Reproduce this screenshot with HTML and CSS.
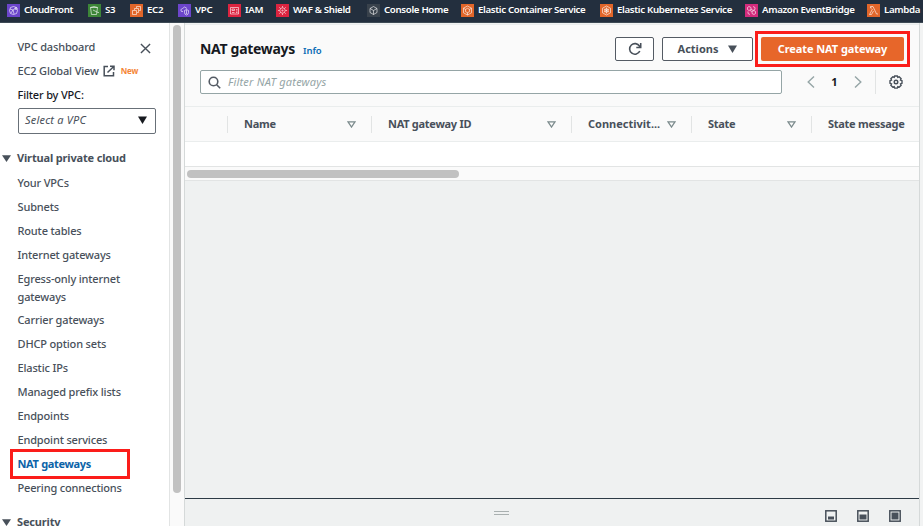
FILE: index.html
```html
<!DOCTYPE html>
<html lang="en">
<head>
<meta charset="utf-8">
<title>NAT gateways | VPC Console</title>
<link rel="stylesheet" href="styles.css">
</head>
<body>
<nav class="topbar">
  <a class="fav"><svg class="ico violet" viewBox="0 0 13 13"><circle cx="6.5" cy="6.5" r="4"/><path d="M3 5l3 1 3-2M6 6l1 4M4 9l2-3"/><circle cx="9" cy="4.5" r="1"/></svg><span>CloudFront</span></a>
  <a class="fav"><svg class="ico green" viewBox="0 0 13 13"><path d="M2.5 3.5h7l-1 7h-5zM2.5 3.5q3.5-2 7 0M5 6l5 2.5h1"/></svg><span>S3</span></a>
  <a class="fav"><svg class="ico orange" viewBox="0 0 13 13"><path d="M2.500 6.500h4v4h-4zM4.500 6V4.500h4v4H7M6.500 4V2.500h4v4H9"/></svg><span>EC2</span></a>
  <a class="fav"><svg class="ico violet" viewBox="0 0 13 13"><path d="M5 7.500H3.500q-2-2 1-3 2-3 4.500 0M6.500 6.500l2-1 2 1v2q0 2-2 2.500-2-.5-2-2.500zM8.500 6v4"/></svg><span>VPC</span></a>
  <a class="fav"><svg class="ico red" viewBox="0 0 13 13"><path d="M2.500 3.500h8v6.500h-8zM4 8.500h2.500M4 6.500h2.500V5H4zM8 5.500h1.500M8 7h1.500M8 8.500h1.500"/></svg><span>IAM</span></a>
  <a class="fav"><svg class="ico red" viewBox="0 0 13 13"><circle cx="6.500" cy="6.500" r="2.700"/><circle cx="6.500" cy="6.500" r=".6"/><path d="M6.500 2v1.500M6.500 9.500V11M2 6.500h1.500M9.500 6.500H11M3.300 3.300l1 1M8.700 8.700l1 1M9.700 3.300l-1 1M4.300 8.700l-1 1"/></svg><span>WAF &amp; Shield</span></a>
  <a class="fav"><svg class="ico dark" viewBox="0 0 13 13"><path d="M6.500 2.500l3.500 2v4l-3.500 2-3.500-2v-4zM3 4.500l3.500 2 3.500-2M6.500 6.500v4"/></svg><span>Console Home</span></a>
  <a class="fav"><svg class="ico orange" viewBox="0 0 13 13"><path d="M6.500 2l4 2.200v4.600l-4 2.200-4-2.200V4.200z"/><path d="M6.500 4.300l2 1.100v2.200l-2 1.100-2-1.100V5.400zM2.500 4.200l2 1.200M10.500 4.200l-2 1.200M6.500 8.700V11"/></svg><span>Elastic Container Service</span></a>
  <a class="fav"><svg class="ico orange" viewBox="0 0 13 13"><path d="M6.500 2l4 2.200v4.600l-4 2.200-4-2.200V4.200z"/><circle cx="6.500" cy="6.500" r="1.800"/><path d="M6.500 3.500v6M3.900 5l5.200 3M9.100 5L3.900 8"/></svg><span>Elastic Kubernetes Service</span></a>
  <a class="fav"><svg class="ico pink" viewBox="0 0 13 13"><path d="M4 2.500l2 1v2l-2 1-1.500-1v-2zM9 6.500l1.500 1v2L9 10.500l-2-1v-2zM8 2.500l2 1v2L8 6.500 6 5M5 6.500l2 1M5 10.500l-2-1v-2"/></svg><span>Amazon EventBridge</span></a>
  <a class="fav"><svg class="ico orange" viewBox="0 0 13 13"><path d="M3.500 2.500H6l3.500 7.500h1.500M5.500 5l-3 5.500h2l2-3.500M3.500 2.500v1.500h1.500"/></svg><span>Lambda</span></a>
</nav>

<div class="shell">
  <aside class="side">
    <svg class="close" viewBox="0 0 12 12"><path d="M1 1l10 10M11 1L1 11"/></svg>
    <a class="item">VPC dashboard</a>
    <a class="item ext">EC2 Global View<svg class="extico" viewBox="0 0 12 12"><path d="M5 1.500H1.200v9.300h9.300V7M7 1.200h4v4M11 1.200L4.500 7.500"/></svg><b class="new">New</b></a>
    <div class="item label">Filter by VPC:</div>
    <div class="select"><i>Select a VPC</i><svg class="caret" viewBox="0 0 9 8"><path d="M0 .5h9L4.500 8z"/></svg></div>
    <div class="group"><svg class="tri" viewBox="0 0 9 7"><path d="M0 .3h9L4.500 7z"/></svg>Virtual private cloud</div>
    <a class="item">Your VPCs</a>
    <a class="item">Subnets</a>
    <a class="item">Route tables</a>
    <a class="item">Internet gateways</a>
    <a class="item two">Egress-only internet gateways</a>
    <a class="item">Carrier gateways</a>
    <a class="item">DHCP option sets</a>
    <a class="item">Elastic IPs</a>
    <a class="item">Managed prefix lists</a>
    <a class="item">Endpoints</a>
    <a class="item">Endpoint services</a>
    <a class="item current">NAT gateways</a>
    <a class="item">Peering connections</a>
    <div class="group last"><svg class="tri" viewBox="0 0 9 7"><path d="M0 .3h9L4.500 7z"/></svg>Security</div>
  </aside>
  <div class="track"><div class="thumb"></div></div>
  <main class="main">
    <header class="head">
      <div class="titles"><h1>NAT gateways</h1><a class="info">Info</a></div>
      <div class="actions">
        <button class="btn refresh"><svg viewBox="0 0 14 14"><path d="M11.800 9A5.300 5.300 0 1 1 11.500 4.200L12.500 5.500M12.700 1v4.500H8.300"/></svg></button>
        <button class="btn act">Actions<svg class="caret" viewBox="0 0 9 8"><path d="M0 .5h9L4.500 8z"/></svg></button>
        <div class="mark"><button class="create">Create NAT gateway</button></div>
      </div>
    </header>
    <div class="tools">
      <div class="search"><svg viewBox="0 0 13 13"><circle cx="5.500" cy="5.500" r="4.300"/><path d="M8.700 8.700l3.500 3.500"/></svg><i>Filter NAT gateways</i></div>
      <div class="pager">
        <svg class="chev" viewBox="0 0 8 12"><path d="M7 .5L1.200 6 7 11.500"/></svg>
        <b>1</b>
        <svg class="chev" viewBox="0 0 8 12"><path d="M1 .5L6.800 6 1 11.500"/></svg>
      </div>
      <div class="settings"><svg viewBox="0 0 14 14"><path d="M5.700 1h2.600l.5 1.300 1.400-.5 1.900 1.900-.6 1.400 1.500.6v2.600l-1.500.6.6 1.400-1.900 1.900-1.400-.6-.5 1.500H5.700l-.5-1.500-1.400.6-1.900-1.900.6-1.400L1 8.300V5.700l1.500-.6-.6-1.400 1.900-1.900 1.400.5z"/><circle cx="7" cy="7" r="1.800"/></svg></div>
    </div>
    <div class="thead">
      <div class="th"></div>
      <div class="th"><span>Name</span><svg class="sort" viewBox="0 0 9 7"><path d="M1 .8h7L4.500 6z"/></svg></div>
      <div class="th"><span>NAT gateway ID</span><svg class="sort" viewBox="0 0 9 7"><path d="M1 .8h7L4.500 6z"/></svg></div>
      <div class="th"><span class="trunc">Connectivit...</span><svg class="sort" viewBox="0 0 9 7"><path d="M1 .8h7L4.500 6z"/></svg></div>
      <div class="th"><span>State</span><svg class="sort" viewBox="0 0 9 7"><path d="M1 .8h7L4.500 6z"/></svg></div>
      <div class="th"><span>State message</span></div>
    </div>
    <div class="empty"></div>
    <div class="hscroll"><div class="hthumb"></div></div>
    <div class="blank"></div>
    <footer class="split">
      <div class="grip"></div>
      <div class="sizes">
        <svg viewBox="0 0 12 12"><rect x=".8" y=".8" width="10.400" height="10.400"/><path d="M3 6.500h6v3H3z"/></svg>
        <svg viewBox="0 0 12 12"><rect x=".8" y=".8" width="10.400" height="10.400"/><path d="M2.500 4.500h7v5h-7z"/></svg>
        <svg viewBox="0 0 12 12"><rect x=".8" y=".8" width="10.400" height="10.400"/><path d="M2.500 2.500h7v7h-7z"/></svg>
      </div>
    </footer>
  </main>
</div>
</body>
</html>
```
FILE: styles.css
```css
* { box-sizing: border-box; }
body {
  margin: 0;
  width: 923px;
  height: 526px;
  overflow: hidden;
  display: flex;
  flex-direction: column;
  font: 11px/16px "Noto Sans", "Open Sans", sans-serif;
  color: #48505a;
  background: #f2f3f3;
}
svg { display: block; flex: none; fill: none; stroke: currentColor; }
h1 { margin: 0; }
button { font: inherit; color: inherit; margin: 0; padding: 0; }

.topbar {
  height: 23px;
  flex: none;
  background: #232f3e;
  border-bottom: 1px solid #3d4a55;
  display: grid;
  grid-template-columns: 81px 42px 48px 50px 48px 91px 94px 139px 145px 122px 60px;
  padding-left: 7px;
  overflow: hidden;
}
.fav {
  display: flex;
  align-items: center;
  gap: 4px;
  height: 20px;
  color: #fff;
  font-size: 9.7px;
  font-weight: 600;
  letter-spacing: -.33px;
  white-space: nowrap;
}
.ico { width: 13px; height: 13px; stroke: #ffffffc0; stroke-width: .8; }
.violet { background: #6c45cb; }
.green { background: #3d8638; }
.orange { background: #e1662a; }
.red { background: #dc2440; }
.dark { background: #39424c; }
.pink { background: #d32b7c; }

.shell { flex: 1; display: flex; min-height: 0; }
.side {
  width: 170px;
  flex: none;
  position: relative;
  background: #fff;
  border-right: 1px solid #e2e4e4;
  padding: 12px 0 0 17.500px;
  overflow: hidden;
}
.close {
  position: absolute;
  left: 140px;
  top: 20px;
  width: 11px;
  height: 11px;
  stroke-width: 1.5;
}
.item { display: block; height: 24px; line-height: 24px; white-space: nowrap; font-weight: 500; letter-spacing: -.16px; }
.two { height: 41px; line-height: 18px; padding-top: 3px; width: 120px; white-space: normal; }
.ext { display: flex; align-items: center; }
.extico { width: 12px; height: 12px; margin-left: 4px; stroke-width: 1.5; }
.new { color: #f58536; font-size: 8px; margin-left: 6px; }
.label { color: #16191f; }
.select {
  width: 138px;
  height: 26px;
  margin: 1px 0 11px .5px;
  border: 1px solid #687078;
  border-radius: 2px;
  display: flex;
  align-items: center;
  justify-content: space-between;
  padding: 0 8px 2px 6px;
  letter-spacing: .2px;
}
.caret { width: 9px; height: 8px; fill: currentColor; stroke: none; }
.select .caret { color: #16191f; }
.group { display: flex; align-items: center; height: 26px; margin-left: -15.500px; font-weight: 700; gap: 6px; letter-spacing: -.16px; }
.tri { width: 9px; height: 7px; fill: currentColor; stroke: none; }
.last { margin-top: 9px; }
.current {
  color: #0b63a8;
  font-weight: 700;
  letter-spacing: -.33px;
  height: 30px;
  line-height: 24px;
  width: 120px;
  margin: -3px 0 -3px -8px;
  padding-left: 5px;
  border: 3px solid #fb1d1a;
}

.track { width: 14px; flex: none; background: #fafafa; padding: 2px 0 0 3px; }
.thumb { width: 8px; height: 468px; border-radius: 4px; background: #c1c1c1; }

.main {
  width: 736px;
  flex: none;
  display: flex;
  flex-direction: column;
  background: #eff1f1;
  border: solid #d5d9d9;
  border-width: 0 1px;
}
.head {
  height: 46px;
  flex: none;
  margin-top: 1px;
  border-top: 1px solid #eaeded;
  background: #fafafa;
  display: flex;
  justify-content: space-between;
  padding: 6px 9px 0 15px;
}
.titles { display: flex; align-items: baseline; gap: 8px; height: 36px; line-height: 36px; }
h1 { font-size: 14px; color: #16191f; letter-spacing: -.3px; }
.info { color: #0b6cb5; font-size: 9.500px; font-weight: 600; letter-spacing: -.1px; }
.actions { display: flex; }
.btn {
  height: 24px;
  margin-top: 6px;
  border: 1px solid #545b64;
  border-radius: 2px;
  background: #fff;
  font-weight: 700;
  display: flex;
  align-items: center;
  justify-content: center;
}
.refresh { width: 39px; margin-right: 8px; }
.refresh svg { width: 14px; height: 14px; stroke-width: 1.6; }
.act { width: 91px; gap: 10px; margin-right: 2px; }
.mark { height: 36px; width: 155px; border: 3px solid #fb1d1a; padding: 3px; }
.create {
  display: block;
  width: 143px;
  height: 24px;
  border: 0;
  border-radius: 2px;
  background: #e7662a;
  color: #fff;
  font-weight: 700;
  letter-spacing: -.08px;
}
.tools { height: 37px; flex: none; display: flex; background: #fafafa; border-bottom: 1px solid #eaeded; padding-left: 15px; }
.search {
  width: 582px;
  height: 24px;
  border: 1px solid #95a5a6;
  border-radius: 2px;
  background: #fff;
  display: flex;
  align-items: center;
  gap: 7px;
  padding-left: 7px;
  color: #95a5a6;
  letter-spacing: .2px;
}
.search svg { width: 13px; height: 13px; stroke: #545b64; stroke-width: 1.6; }
.pager { width: 93px; height: 24px; display: flex; align-items: center; justify-content: space-between; padding: 0 13px 0 25px; color: #16191f; }
.chev { width: 8px; height: 12px; stroke: #95a5a6; stroke-width: 1.4; }
.settings { height: 24px; border-left: 1px solid #e2e4e4; padding: 5px 0 0 13px; }
.settings svg { width: 14px; height: 14px; stroke-width: 1.4; }

.thead {
  height: 35px;
  flex: none;
  display: grid;
  grid-template-columns: 43px 144px 200px 120px 120px 107px;
  align-items: center;
  background: #fafafa;
  border-bottom: 1px solid #eaeded;
  font-weight: 700;
  letter-spacing: -.28px;
}
.th { height: 17px; border-right: 1px solid #e2e4e4; display: flex; align-items: center; justify-content: space-between; padding: 0 15px 0 16px; white-space: nowrap; }
.th:last-child { border: 0; padding-right: 0; }
.trunc { letter-spacing: 0; }
.sort { width: 9px; height: 7px; stroke: #7b8a8c; stroke-width: 1.3; }
.empty { height: 24px; flex: none; background: #fff; }
.hscroll { height: 15px; flex: none; background: #fafafa; border: solid #e2e4e4; border-width: 1px 0; padding: 3px 0 0 2px; }
.hthumb { width: 272px; height: 8px; border-radius: 4px; background: #c1c1c1; }
.blank { flex: 1; }
.split { height: 28px; flex: none; border-top: 1px solid #2d3b46; position: relative; }
.grip { position: absolute; left: 309px; top: 12px; width: 15px; height: 4px; border: solid #a9b0b0; border-width: 1px 0; }
.sizes { display: flex; justify-content: flex-end; gap: 20px; padding: 11px 18px 0 0; }
.sizes svg { width: 12px; height: 12px; stroke-width: 1.5; }
.sizes path { fill: currentColor; stroke: none; }
```
